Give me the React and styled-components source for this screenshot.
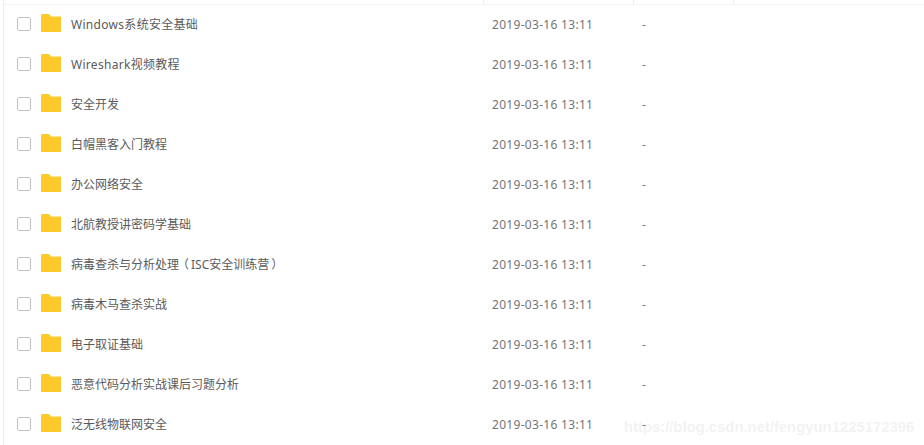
import React from "react";
import styled, { createGlobalStyle } from "styled-components";

const Global = createGlobalStyle`
  html, body { margin: 0; padding: 0; background: #fff; }
  body { font-family: "Noto Sans", "Noto Sans CJK SC", sans-serif; }
`;

const Page = styled.div`
  position: relative;
  width: 924px;
  height: 445px;
  overflow: hidden;
  background: #fff;
`;

const Table = styled.div`
  margin-left: 3px;
  border-left: 1px solid #ececec;
  height: 445px;
`;

const HeaderRow = styled.div`
  display: grid;
  grid-template-columns: 480px 150px 100px;
  height: 5px;
  width: 920px;
  border-bottom: 1px solid #f4f4f4;
  box-sizing: border-box;
`;

const HeaderCell = styled.div`
  border-right: 1px solid #eeeeee;
`;

const List = styled.div`
  display: flex;
  flex-direction: column;
  margin-top: -1px;
`;

const Row = styled.div`
  display: grid;
  grid-template-columns: 480px 150px 1fr;
  align-items: center;
  height: 40px;
`;

const NameCell = styled.div`
  display: flex;
  align-items: center;
  padding-left: 13px;
`;

const Check = styled.span`
  box-sizing: border-box;
  width: 14px;
  height: 14px;
  border: 1px solid #c4c4c4;
  border-radius: 2px;
  background: #fff;
  flex: none;
`;

const Folder = styled.svg`
  width: 22px;
  height: 20px;
  margin-left: 9px;
  margin-top: -2px;
  flex: none;
`;

const Name = styled.span`
  margin-left: 9px;
  font-size: 12px;
  color: #5a5a5a;
  white-space: nowrap;
  letter-spacing: ${p => p.$latin ? "0.3px" : "0"};
`;

const Paren = styled.span`
  display: inline-block;
  width: 12px;
  text-align: center;
  font-family: "Noto Sans CJK TC", sans-serif;
  margin-left: ${p => p.$open ? "-2px" : "2px"};
  margin-right: ${p => p.$open ? "2px" : "-2px"};
`;

const DateCell = styled.div`
  padding-left: 8px;
  font-size: 12px;
  letter-spacing: 0.3px;
  color: #757575;
  white-space: nowrap;
`;

const SizeCell = styled.div`
  padding-left: 8px;
  font-size: 12px;
  color: #757575;
`;

const Watermark = styled.div`
  position: absolute;
  left: 624px;
  top: 418px;
  font-family: "Liberation Sans", Arial, sans-serif;
  font-size: 15px;
  font-weight: 700;
  letter-spacing: -0.08px;
  line-height: 18px;
  color: rgba(190, 190, 190, 0.2);
  white-space: nowrap;
`;

const names = [
  "Windows系统安全基础",
  "Wireshark视频教程",
  "安全开发",
  "白帽黑客入门教程",
  "办公网络安全",
  "北航教授讲密码学基础",
  "病毒查杀与分析处理（ISC安全训练营）",
  "病毒木马查杀实战",
  "电子取证基础",
  "恶意代码分析实战课后习题分析",
  "泛无线物联网安全",
];

const FolderIcon = () => (
  <Folder viewBox="0 0 22 20">
    <path d="M1 2.5C1 1.7 1.6 1 2.4 1h6c.5 0 .9.2 1.2.6L11 3.5h9c.6 0 1 .5 1 1v13.6c0 .6-.4.9-1 .9H2c-.6 0-1-.4-1-1z" fill="#fdc92b" />
  </Folder>
);

const withParens = n =>
  n.split(/([（）])/).map((part, i) =>
    part === "（" || part === "）" ? <Paren key={i} $open={part === "（"}>{part}</Paren> : part
  );

export default function App() {
  return (
    <Page>
      <Global />
      <Table>
        <HeaderRow>
          <HeaderCell />
          <HeaderCell />
          <HeaderCell />
        </HeaderRow>
        <List>
          {names.map(n => (
            <Row key={n}>
              <NameCell>
                <Check />
                <FolderIcon />
                <Name $latin={/^W/.test(n)}>{withParens(n)}</Name>
              </NameCell>
              <DateCell>2019-03-16 13:11</DateCell>
              <SizeCell>-</SizeCell>
            </Row>
          ))}
        </List>
      </Table>
      <Watermark>https://blog.csdn.net/fengyun1225172396</Watermark>
    </Page>
  );
}
